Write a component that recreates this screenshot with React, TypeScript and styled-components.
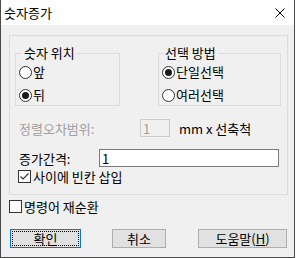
import styled, { createGlobalStyle } from 'styled-components';

const GlobalStyle = createGlobalStyle`
  html, body {
    margin: 0;
    padding: 0;
    background: #ffffff;
  }
  * {
    box-sizing: border-box;
  }
`;

const Window = styled.div`
  width: 295px;
  height: 258px;
  display: flex;
  flex-direction: column;
  background: #f0f0f0;
  border: 1px solid #4a4a4a;
  border-top: none;
  font-family: "Noto Sans CJK KR", "Noto Sans", sans-serif;
  font-size: 13px;
  color: #000000;
`;

const TitleBar = styled.div`
  height: 25px;
  display: flex;
  align-items: center;
  justify-content: space-between;
  background: #ffffff;
  padding: 0 9px 0 3px;
`;

const Title = styled.span`
  line-height: 16px;
`;

const Body = styled.div`
  display: flex;
  flex-direction: column;
  padding: 10px 0 0 8px;
`;

const OuterGroup = styled.div`
  width: 279px;
  display: flex;
  flex-direction: column;
  border: 1px solid #dcdcdc;
  padding: 9px 0 9px 5px;
`;

const GroupRow = styled.div`
  display: flex;
  gap: 38px;
`;

const Group = styled.fieldset<{ $width: number }>`
  width: ${p => p.$width}px;
  margin: 0;
  padding: 3px 3px 2px 3px;
  border: 1px solid #dcdcdc;
  display: flex;
  flex-direction: column;
  gap: 7px;
`;

const Legend = styled.legend<{ $offset: number }>`
  padding: 0 2px;
  margin-left: ${p => p.$offset}px;
  line-height: 16px;
`;

const OptionRow = styled.label`
  height: 16px;
  display: flex;
  align-items: center;
  gap: 1px;
  line-height: 16px;
`;

const Radio = styled.span<{ $checked?: boolean }>`
  width: 13px;
  height: 13px;
  border-radius: 50%;
  border: 1px solid #333333;
  background: #ffffff;
  display: flex;
  align-items: center;
  justify-content: center;
  flex: none;

  &::after {
    content: '';
    width: 7px;
    height: 7px;
    border-radius: 50%;
    background: #1a1a1a;
    display: ${p => (p.$checked ? 'block' : 'none')};
  }
`;

const FieldRow = styled.div<{ $top: number; $disabled?: boolean }>`
  height: 20px;
  margin-top: ${p => p.$top}px;
  padding-left: 4px;
  display: flex;
  align-items: center;
  color: ${p => (p.$disabled ? '#a0a0a0' : '#000000')};
`;

const FieldLabel = styled.span<{ $width: number }>`
  width: ${p => p.$width}px;
  flex: none;
`;

const TextBox = styled.div<{ $width: number; $disabled?: boolean }>`
  width: ${p => p.$width}px;
  height: 18px;
  padding: 0 2px;
  display: flex;
  align-items: center;
  background: ${p => (p.$disabled ? '#f0f0f0' : '#ffffff')};
  border: 1px solid ${p => (p.$disabled ? '#cccccc' : '#7a7a7a')};
  color: ${p => (p.$disabled ? '#a0a0a0' : '#000000')};
`;

const Unit = styled.span`
  margin-left: 9px;
  color: #000000;
`;

const CheckRow = styled.label<{ $left: number; $top: number }>`
  height: 17px;
  margin-top: ${p => p.$top}px;
  padding-left: ${p => p.$left}px;
  display: flex;
  align-items: center;
  gap: 2px;
`;

const CheckBox = styled.span`
  width: 13px;
  height: 13px;
  border: 1px solid #333333;
  background: #ffffff;
  display: flex;
  flex: none;
`;

const ButtonRow = styled.div`
  margin-top: 14px;
  padding-left: 1px;
  display: flex;
  align-items: center;
`;

const Button = styled.button<{ $width: number; $gap: number; $focused?: boolean }>`
  width: ${p => p.$width}px;
  height: 19px;
  margin-left: ${p => p.$gap}px;
  padding: 0;
  display: flex;
  align-items: center;
  justify-content: center;
  background: #e1e1e1;
  border: 1px solid ${p => (p.$focused ? '#0078d7' : '#adadad')};
  font-family: inherit;
  font-size: 13px;
  color: #000000;
  line-height: 13px;
`;

const FocusRing = styled.span`
  flex: 1;
  align-self: stretch;
  margin: 1px;
  display: flex;
  align-items: center;
  justify-content: center;
  border: 1px dotted #000000;
`;

function CloseIcon() {
  return (
    <svg width="10" height="10" viewBox="0 0 10 10">
      <path d="M0.5 0.5 L9.5 9.5 M9.5 0.5 L0.5 9.5" stroke="#000" strokeWidth="1" fill="none" />
    </svg>
  );
}

function Check() {
  return (
    <svg width="11" height="11" viewBox="0 0 11 11">
      <path d="M1.5 5.5 L4 8 L9.5 2.5" stroke="#333" strokeWidth="1.1" fill="none" />
    </svg>
  );
}

export default function App() {
  return (
    <>
      <GlobalStyle />
      <Window>
        <TitleBar>
          <Title>숫자증가</Title>
          <CloseIcon />
        </TitleBar>
        <Body>
          <OuterGroup>
            <GroupRow>
              <Group $width={105}>
                <Legend $offset={3}>숫자 위치</Legend>
                <OptionRow>
                  <Radio />
                  앞
                </OptionRow>
                <OptionRow>
                  <Radio $checked />
                  뒤
                </OptionRow>
              </Group>
              <Group $width={123}>
                <Legend $offset={1}>선택 방법</Legend>
                <OptionRow>
                  <Radio $checked />
                  단일선택
                </OptionRow>
                <OptionRow>
                  <Radio />
                  여러선택
                </OptionRow>
              </Group>
            </GroupRow>
            <FieldRow $top={12} $disabled>
              <FieldLabel $width={121}>정렬오차범위:</FieldLabel>
              <TextBox $width={30} $disabled>1</TextBox>
              <Unit>mm x 선축척</Unit>
            </FieldRow>
            <FieldRow $top={10}>
              <FieldLabel $width={80}>증가간격:</FieldLabel>
              <TextBox $width={180}>1</TextBox>
            </FieldRow>
            <CheckRow $left={3} $top={0}>
              <CheckBox>
                <Check />
              </CheckBox>
              사이에 빈칸 삽입
            </CheckRow>
          </OuterGroup>
          <CheckRow $left={0} $top={3}>
            <CheckBox />
            명령어 재순환
          </CheckRow>
          <ButtonRow>
            <Button $width={71} $gap={0} $focused>
              <FocusRing>확인</FocusRing>
            </Button>
            <Button $width={54} $gap={31}>취소</Button>
            <Button $width={89} $gap={32}>
              <span>
                도움말(<u>H</u>)
              </span>
            </Button>
          </ButtonRow>
        </Body>
      </Window>
    </>
  );
}
